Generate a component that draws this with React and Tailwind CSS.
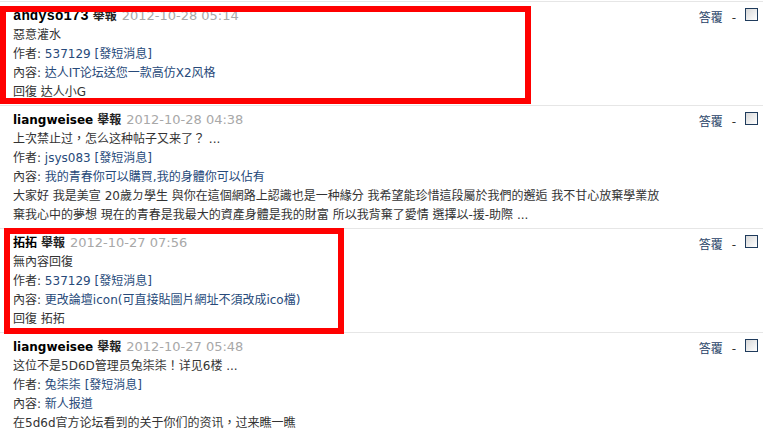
import React from 'react';

const BODY_FONT = "font-['DejaVu_Sans','Noto_Sans_CJK_TC',sans-serif]";

const POSTS = [
  {
    user: 'andyso173',
    mono: true,
    date: '2012-10-28 05:14',
    lines: ['惡意灌水'],
    author: '537129',
    content: '达人IT论坛送您一款高仿X2风格',
    extra: ['回復 达人小G'],
  },
  {
    user: 'liangweisee',
    date: '2012-10-28 04:38',
    lines: ['上次禁止过，怎么这种帖子又来了？ ...'],
    author: 'jsys083',
    content: '我的青春你可以購買,我的身體你可以佔有',
    extra: [
      '大家好 我是美宣 20歲ㄉ學生 與你在這個網路上認識也是一种緣分 我希望能珍惜這段屬於我們的邂逅 我不甘心放棄學業放',
      '棄我心中的夢想 現在的青春是我最大的資產身體是我的財富 所以我背棄了愛情 選擇以-援-助際 ...',
    ],
  },
  {
    user: '拓拓',
    date: '2012-10-27 07:56',
    lines: ['無內容回復'],
    author: '537129',
    content: '更改論壇icon(可直接貼圖片網址不須改成ico檔)',
    extra: ['回復 拓拓'],
  },
  {
    user: 'liangweisee',
    date: '2012-10-27 05:48',
    lines: ['这位不是5D6D管理员兔柒柒！详见6楼 ...'],
    author: '兔柒柒',
    content: '新人报道',
    extra: ['在5d6d官方论坛看到的关于你们的资讯，过来瞧一瞧'],
  },
];

function Checkbox() {
  return (
    <span className="inline-block h-[13px] w-[13px] border border-[#1f3b5c] bg-gradient-to-br from-[#d8d8d8] to-[#ffffff]" />
  );
}

function PostRow({ post }) {
  return (
    <div className="flex justify-between border-t border-[#e6e6e6] pb-[3px] pt-[4px]">
      <div className="pl-[13px] text-[12px] leading-[19px] text-[#333]">
        <div className="flex items-baseline whitespace-nowrap">
          {post.mono ? (
            <span className="font-['Liberation_Mono',monospace] text-[14px] leading-[19px] font-bold text-black">
              {post.user}
            </span>
          ) : (
            <span className="font-bold text-black">{post.user}</span>
          )}
          <span className="ml-[4px] font-bold text-[#222]">舉報</span>
          <span className="ml-[5px] text-[13px] leading-[19px] text-[#a8a8a8]">{post.date}</span>
        </div>
        {post.lines.map((l) => (
          <div key={l} className="whitespace-nowrap">{l}</div>
        ))}
        <div className="whitespace-nowrap">
          作者: <span className="text-[#274a7a]">{post.author} [發短消息]</span>
        </div>
        <div className="whitespace-nowrap">
          內容: <span className="text-[#274a7a]">{post.content}</span>
        </div>
        {post.extra.map((l) => (
          <div key={l} className="whitespace-nowrap">{l}</div>
        ))}
      </div>
      <div className="flex h-[22px] items-end gap-[9px] pr-[5px] text-[12px] leading-[19px] text-[#1f3f66]">
        <span>答覆</span>
        <span className="text-[#333]">-</span>
        <span className="pb-[1px]">
          <Checkbox />
        </span>
      </div>
    </div>
  );
}

export default function App() {
  return (
    <div className={`relative h-[435px] w-[763px] overflow-hidden bg-white pt-[1px] ${BODY_FONT}`}>
      {POSTS.map((p, i) => (
        <PostRow key={i} post={p} />
      ))}
      <div className="pointer-events-none absolute left-0 top-[6px] h-[98px] w-[531px] border-[6px] border-[#ff0000]" />
      <div className="pointer-events-none absolute left-[4px] top-[228px] h-[106px] w-[340px] border-[6px] border-[#ff0000]" />
    </div>
  );
}
